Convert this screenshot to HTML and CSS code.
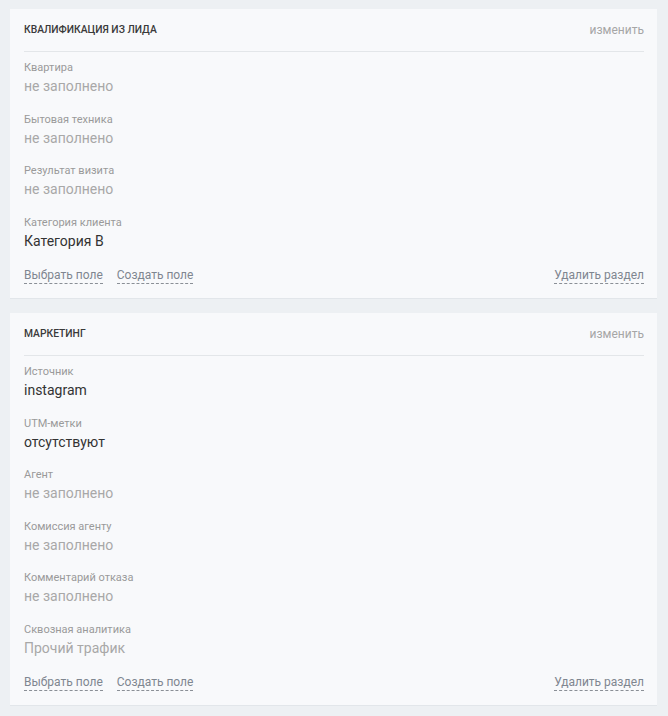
FILE: index.html
```html
<!DOCTYPE html>
<html lang="ru">
<head>
  <meta charset="UTF-8">
  <title>Карточка сделки</title>
  <link rel="stylesheet" href="styles.css">
</head>
<body>
  <div class="section">
    <div class="section-head">
      <span class="section-title">Квалификация из лида</span>
      <a class="edit-link" href="#">изменить</a>
    </div>
    <div class="fields">
      <div class="field">
        <div class="field-label">Квартира</div>
        <div class="field-value empty">не заполнено</div>
      </div>
      <div class="field">
        <div class="field-label">Бытовая техника</div>
        <div class="field-value empty">не заполнено</div>
      </div>
      <div class="field">
        <div class="field-label">Результат визита</div>
        <div class="field-value empty">не заполнено</div>
      </div>
      <div class="field">
        <div class="field-label">Категория клиента</div>
        <div class="field-value">Категория B</div>
      </div>
    </div>
    <div class="section-foot">
      <div class="foot-left">
        <a class="dash-link" href="#">Выбрать поле</a>
        <a class="dash-link" href="#">Создать поле</a>
      </div>
      <a class="dash-link" href="#">Удалить раздел</a>
    </div>
  </div>

  <div class="section">
    <div class="section-head">
      <span class="section-title">Маркетинг</span>
      <a class="edit-link" href="#">изменить</a>
    </div>
    <div class="fields">
      <div class="field">
        <div class="field-label">Источник</div>
        <div class="field-value">instagram</div>
      </div>
      <div class="field">
        <div class="field-label">UTM-метки</div>
        <div class="field-value">отсутствуют</div>
      </div>
      <div class="field">
        <div class="field-label">Агент</div>
        <div class="field-value empty">не заполнено</div>
      </div>
      <div class="field">
        <div class="field-label">Комиссия агенту</div>
        <div class="field-value empty">не заполнено</div>
      </div>
      <div class="field">
        <div class="field-label">Комментарий отказа</div>
        <div class="field-value empty">не заполнено</div>
      </div>
      <div class="field">
        <div class="field-label">Сквозная аналитика</div>
        <div class="field-value empty">Прочий трафик</div>
      </div>
    </div>
    <div class="section-foot">
      <div class="foot-left">
        <a class="dash-link" href="#">Выбрать поле</a>
        <a class="dash-link" href="#">Создать поле</a>
      </div>
      <a class="dash-link" href="#">Удалить раздел</a>
    </div>
  </div>
</body>
</html>
```

FILE: styles.css
```css
/* General styles */
body {
  font-family: Roboto, "Liberation Sans", Arial, sans-serif;
  margin: 0;
  padding: 9px 11px 0 10px;
  background: #edf0f3;
  color: #333;
}

a {
  text-decoration: none;
}

.section {
  background: #f8f9fb;
  border-bottom: 1px solid #e2e6ea;
  padding: 0 13px 14px 14px;
  margin-bottom: 14px;
}

.section-head {
  display: flex;
  justify-content: space-between;
  align-items: center;
  padding: 13px 0 13px;
  line-height: 16px;
  border-bottom: 1px solid #e3e6e9;
}

.section-title {
  font-size: 10.3px;
  font-weight: 500;
  text-transform: uppercase;
  color: #3a3a3a;
}

.edit-link {
  font-size: 12px;
  color: #a6a6a6;
}

.fields {
  padding-top: 8px;
}

.field {
  margin-bottom: 15.5px;
}

.field-label {
  font-size: 11px;
  line-height: 16px;
  color: #9a9a9a;
}

.field-value {
  font-size: 14px;
  line-height: 20px;
  color: #333;
}

.field-value.empty {
  color: #a8a8a8;
}

.section-foot {
  display: flex;
  justify-content: space-between;
  padding-top: 2px;
  line-height: 15px;
}

.foot-left {
  display: flex;
  gap: 14px;
}

.dash-link {
  font-size: 12px;
  color: #7f8690;
  border-bottom: 1px dashed #8a8f96;
}
```
